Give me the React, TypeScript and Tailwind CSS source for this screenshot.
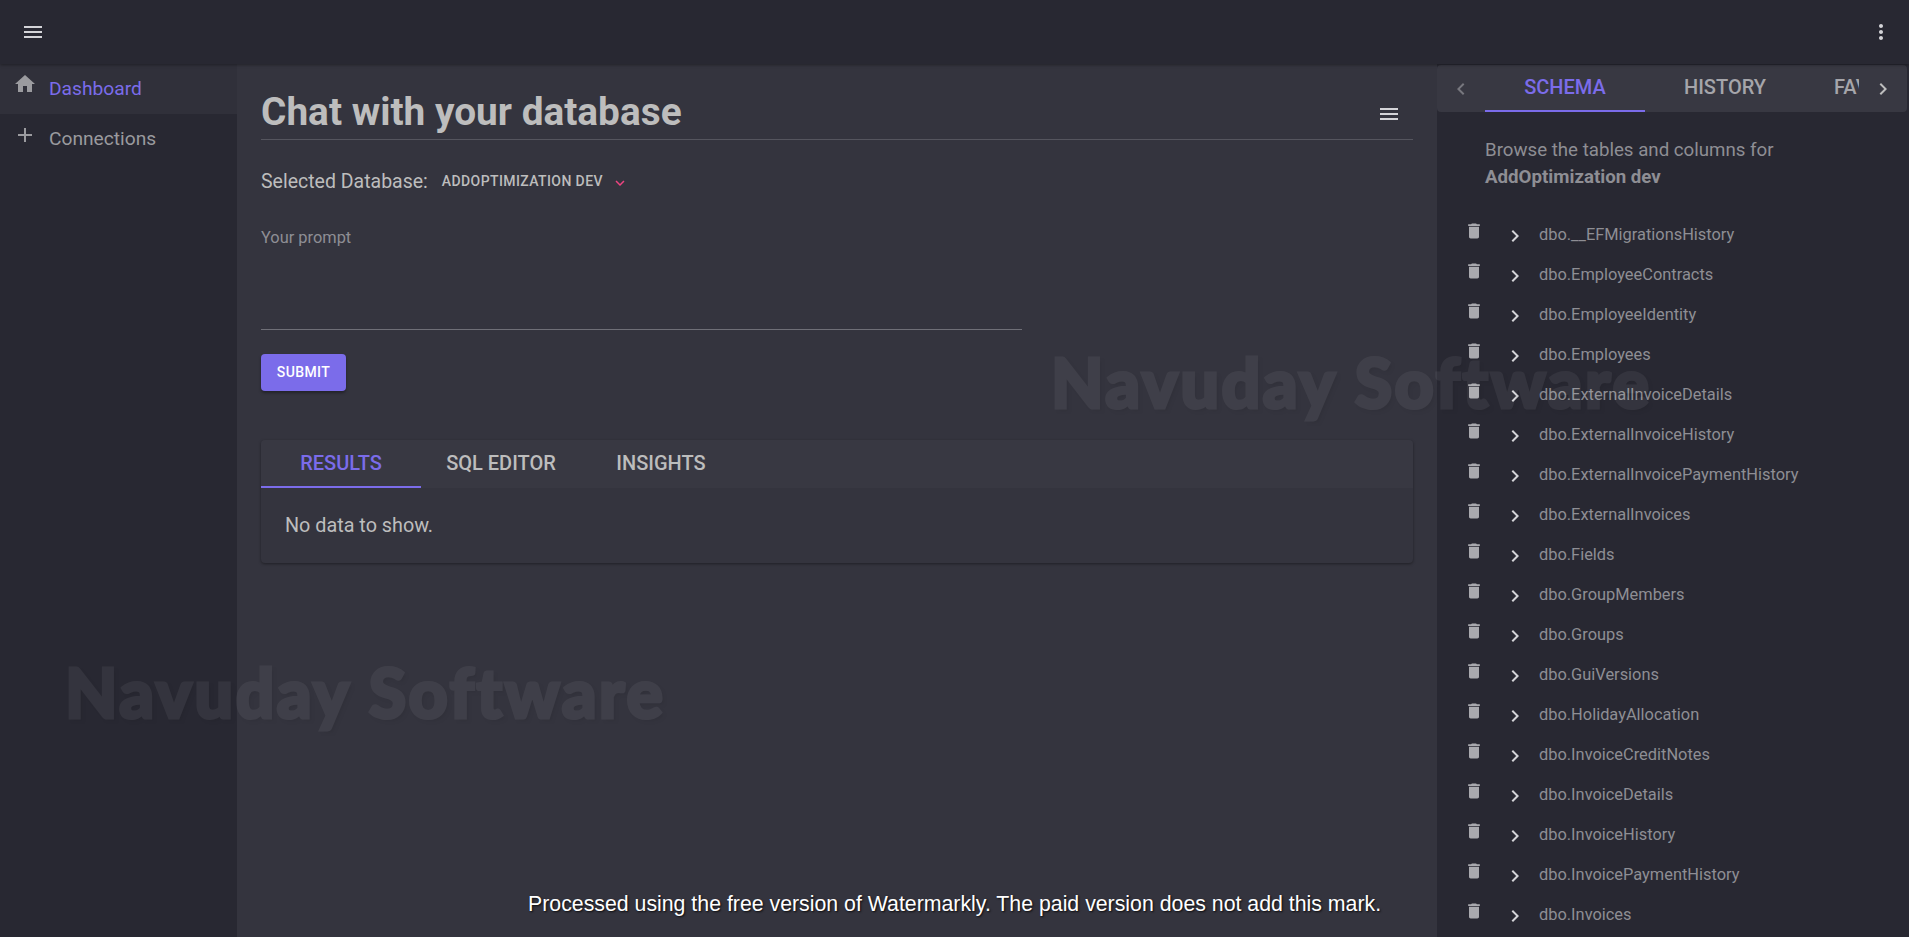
import { MdAdd, MdChevronLeft, MdChevronRight, MdDelete, MdExpandMore, MdHome, MdMenu, MdMoreVert } from 'react-icons/md'

const TABLES = [
  'dbo.__EFMigrationsHistory',
  'dbo.EmployeeContracts',
  'dbo.EmployeeIdentity',
  'dbo.Employees',
  'dbo.ExternalInvoiceDetails',
  'dbo.ExternalInvoiceHistory',
  'dbo.ExternalInvoicePaymentHistory',
  'dbo.ExternalInvoices',
  'dbo.Fields',
  'dbo.GroupMembers',
  'dbo.Groups',
  'dbo.GuiVersions',
  'dbo.HolidayAllocation',
  'dbo.InvoiceCreditNotes',
  'dbo.InvoiceDetails',
  'dbo.InvoiceHistory',
  'dbo.InvoicePaymentHistory',
  'dbo.Invoices',
]

function Header() {
  return (
    <header className="flex h-16 shrink-0 items-center justify-between bg-[#282832] pl-[21px] pr-4 text-[#d4d4d8] shadow-[0_1px_3px_rgba(0,0,0,0.35)] relative z-10">
      <MdMenu size={24} />
      <MdMoreVert size={24} />
    </header>
  )
}

function Sidebar() {
  return (
    <aside className="w-[237px] shrink-0 bg-[#282832] text-[19.2px]">
      <div className="flex h-[50px] bg-[#30303a] pl-[13px]">
        <MdHome size={24} className="mt-2 text-[#9b9b9f]" />
        <span className="ml-3 mt-[11px] leading-[27px] text-[#7b6cea]">Dashboard</span>
      </div>
      <div className="flex h-[50px] pl-[13px]">
        <MdAdd size={24} className="mt-[9px] text-[#9b9b9f]" />
        <span className="ml-3 mt-[11px] leading-[27px] text-[#9a9a9e]">Connections</span>
      </div>
    </aside>
  )
}

function ResultTabs() {
  return (
    <section className="mt-[49px] h-[123px] rounded bg-[#34343e] shadow-[0_1px_3px_rgba(0,0,0,0.4)]">
      <div className="flex h-12 rounded-t bg-[#383842] text-[20px] font-medium leading-[46px]">
        <div className="h-12 w-40 border-b-2 border-[#7b6cea] text-center text-[#7b6cea]">RESULTS</div>
        <div className="h-12 w-40 text-center text-[#bdbdbd]">SQL EDITOR</div>
        <div className="h-12 w-40 text-center text-[#bdbdbd]">INSIGHTS</div>
      </div>
      <p className="pl-6 pt-[24px] text-[19.8px] leading-[27px] text-[#bdbdbd]">No data to show.</p>
    </section>
  )
}

function Main() {
  return (
    <main className="min-w-0 flex-1 bg-[#34343e] pl-6 pr-6">
      <div className="flex h-[76px] items-end justify-between border-b border-[#55555e]">
        <h1 className="text-[38.8px] font-bold leading-[54px] text-[#bdbdbd]">Chat with your database</h1>
        <MdMenu size={24} className="mb-[13px] mr-3 text-[#d4d4d8]" />
      </div>
      <div className="mt-[28px] flex h-[27px] items-center">
        <span className="text-[19.5px] text-[#bdbdbd]">Selected Database:</span>
        <span className="ml-[14px] text-[14px] font-medium tracking-[0.4px] text-[#bdbdbd]">ADDOPTIMIZATION DEV</span>
        <MdExpandMore size={18} className="ml-[8px] mt-[2px] text-[#ee4480]" />
      </div>
      <div className="mt-[31px] h-[104px] w-[761px] border-b border-[#6f6f77]">
        <span className="text-[16.4px] leading-[24px] text-[#8e8e94]">Your prompt</span>
      </div>
      <button className="mt-[24px] block h-[37px] w-[85px] rounded bg-[#7b6cea] text-[14px] font-medium tracking-[0.4px] text-white shadow-[0_2px_3px_rgba(0,0,0,0.35)]">
        SUBMIT
      </button>
      <ResultTabs />
    </main>
  )
}

function SchemaPanel() {
  return (
    <aside className="w-[472px] shrink-0 overflow-hidden bg-[#282832]">
      <div className="mt-px flex h-[47px] w-[470px] overflow-hidden rounded bg-[#383842] text-[20px] font-medium text-[#a5a5aa]">
        <div className="flex w-12 shrink-0 items-center justify-center text-[#77777e]"><MdChevronLeft size={24} /></div>
        <div className="flex min-w-0 flex-1 overflow-hidden leading-[45px]">
          <div className="h-[47px] w-40 shrink-0 border-b-2 border-[#7b6cea] text-center text-[#7b6cea]">SCHEMA</div>
          <div className="w-40 shrink-0 text-center">HISTORY</div>
          <div className="w-40 shrink-0 text-center">FAVORITES</div>
        </div>
        <div className="flex w-12 shrink-0 items-center justify-center text-[#bdbdbd]"><MdChevronRight size={24} /></div>
      </div>
      <p className="ml-12 mt-[25px] text-[18.7px] leading-[27px] text-[#8e8e94]">
        Browse the tables and columns for
        <br />
        <b className="font-bold">AddOptimization dev</b>
      </p>
      <ul className="mt-[24.5px] text-[16.4px] text-[#8e8e94]">
        {TABLES.map((t) => (
          <li key={t} className="flex h-10 items-center">
            <MdDelete size={20} className="relative top-[-5px] ml-[27px] text-[#a9a9ae]" />
            <MdChevronRight size={24} className="ml-[19px] text-[#d4d4d8]" />
            <span className="ml-[12px]">{t}</span>
          </li>
        ))}
      </ul>
    </aside>
  )
}

export default function App() {
  return (
    <div className="relative flex h-[937px] flex-col overflow-hidden font-['Roboto',sans-serif]">
      <Header />
      <div className="flex min-h-0 flex-1">
        <Sidebar />
        <Main />
        <SchemaPanel />
      </div>
      {/* watermarks burnt into the screenshot, they sit over everything */}
      <div className="pointer-events-none absolute left-[65px] top-[641px] whitespace-nowrap font-['Lato',sans-serif] text-[68px] font-black tracking-[2.5px] text-white opacity-[0.055] [-webkit-text-stroke:3px_white] [text-shadow:3px_3px_3px_black]">
        Navuday Software
      </div>
      <div className="pointer-events-none absolute left-[1051px] top-[331px] whitespace-nowrap font-['Lato',sans-serif] text-[68px] font-black tracking-[2.5px] text-white opacity-[0.055] [-webkit-text-stroke:3px_white] [text-shadow:3px_3px_3px_black]">
        Navuday Software
      </div>
      <div className="pointer-events-none absolute left-[528px] top-[889px] whitespace-nowrap font-['Liberation_Sans',sans-serif] text-[21.3px] text-white [text-shadow:1px_1px_2px_rgba(0,0,0,0.8)]">
        Processed using the free version of Watermarkly. The paid version does not add this mark.
      </div>
    </div>
  )
}
